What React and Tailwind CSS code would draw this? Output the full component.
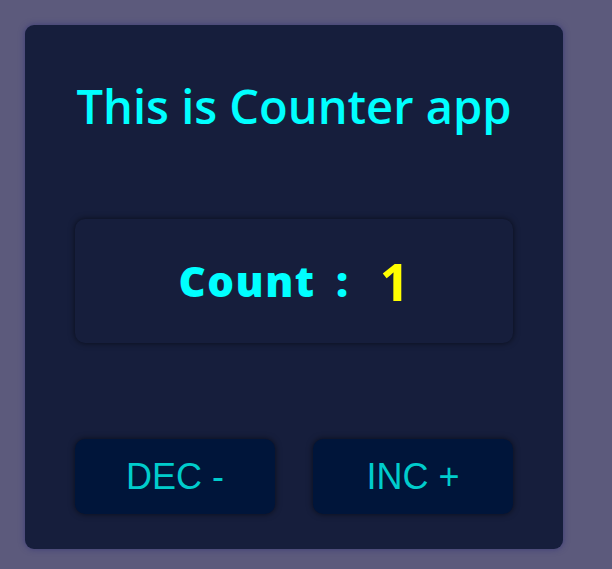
import { useState } from 'react';

export default function App() {
  const [count, setCount] = useState(1);
  return (
    <div className="min-h-screen bg-[#5c5a7c] pt-[25px] pl-[25px]">
      <div className="w-[538px] h-[524px] rounded-[9px] bg-[#161e3c] shadow-[0_0_6px_rgba(40,40,120,0.6)] px-[50px] pt-[58px] flex flex-col">
        <h1 className="text-center text-[#00ffff] text-[47px] leading-[1] font-semibold font-['Open_Sans',sans-serif]">
          This is Counter app
        </h1>
        <div className="mt-[89px] h-[124px] rounded-[10px] bg-[#161e3c] shadow-[0_0_6px_rgba(0,0,0,0.6)] flex items-center justify-center gap-[30px] font-['Open_Sans',sans-serif]">
          <span className="text-[#00ffff] text-[42px] leading-[1] font-extrabold tracking-[1.5px] [word-spacing:8px]">Count :</span>
          <span className="text-[#ffff00] text-[52px] leading-[1] font-bold">{count}</span>
        </div>
        <div className="mt-[96px] flex justify-between font-['Liberation_Sans',sans-serif]">
          <button
            onClick={() => setCount(count - 1)}
            className="w-[200px] h-[75px] rounded-[10px] bg-[#00153a] text-[#00cccc] text-[36px] shadow-[0_0_6px_rgba(0,0,0,0.6)]"
          >
            DEC -
          </button>
          <button
            onClick={() => setCount(count + 1)}
            className="w-[200px] h-[75px] rounded-[10px] bg-[#00153a] text-[#00cccc] text-[36px] shadow-[0_0_6px_rgba(0,0,0,0.6)]"
          >
            INC +
          </button>
        </div>
      </div>
    </div>
  );
}
